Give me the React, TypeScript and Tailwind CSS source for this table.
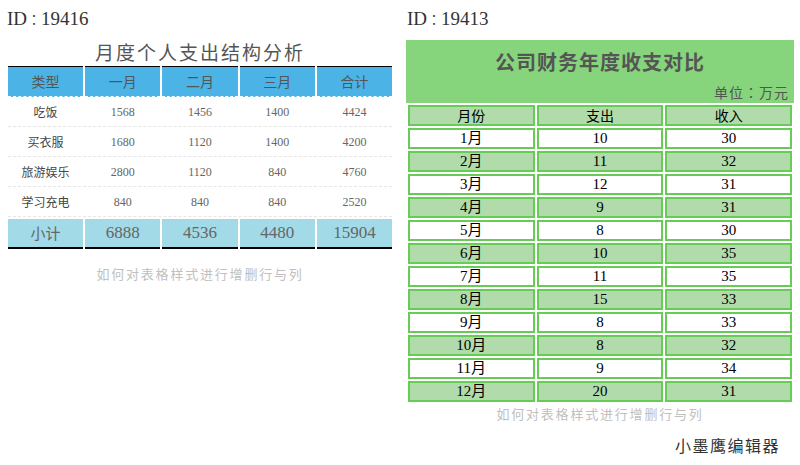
import React from 'react';

const SERIF = "font-['Liberation_Serif','Noto_Sans_CJK_SC',serif]";
const SANS = "font-['Noto_Sans_CJK_SC',sans-serif]";
const COLON = "font-['Noto_Sans_CJK_TC',sans-serif]";

const personal = [
  { type: '吃饭', vals: [1568, 1456, 1400, 4424] },
  { type: '买衣服', vals: [1680, 1120, 1400, 4200] },
  { type: '旅游娱乐', vals: [2800, 1120, 840, 4760] },
  { type: '学习充电', vals: [840, 840, 840, 2520] },
];

const company = [
  [10, 30], [11, 32], [12, 31], [9, 31], [8, 30], [10, 35],
  [11, 35], [15, 33], [8, 33], [8, 32], [9, 34], [20, 31],
];

const IdLabel = ({ id }: { id: string }) => (
  <div className={`${SERIF} flex items-center text-[19px] leading-none text-[#333] pl-[7px] pt-[9px]`}>
    ID
    <span className={`${COLON} inline-flex w-[14px] justify-center text-[15px] font-light`}>：</span>
    {id}
  </div>
);

// 왼쪽 표: 월별 개인 지출
const PersonalTable = () => (
  <div className="w-[400px] shrink-0">
    <div className="h-[38px]">
      <IdLabel id="19416" />
    </div>
    <div className={`${SANS} text-center text-[19px] leading-[28px] tracking-[2px] text-[#555]`}>
      月度个人支出结构分析
    </div>
    <div className="mx-[8px] w-[384px]">
      <div className="grid grid-cols-5 gap-x-[2px]">
        {['类型', '一月', '二月', '三月', '合计'].map((h) => (
          <div key={h} className="h-[31px] border-t border-black bg-[#4cb3e6]">
            <div
              className={`${SANS} h-[30px] border-b border-dashed border-white flex items-center justify-center text-[14px] text-[#555]`}
            >
              {h}
            </div>
          </div>
        ))}
      </div>
      {personal.map((r) => (
        <div key={r.type} className="grid grid-cols-5 gap-x-[2px] h-[30px] border-b border-dashed border-[#e6e6e6]">
          <div className={`${SANS} flex items-center justify-center text-[12px] text-[#444]`}>{r.type}</div>
          {r.vals.map((v, i) => (
            <div key={i} className={`${SERIF} flex items-center justify-center text-[12px] text-[#666]`}>
              {v}
            </div>
          ))}
        </div>
      ))}
      <div className="grid grid-cols-5 gap-x-[2px] mt-[2px]">
        {['小计', '6888', '4536', '4480', '15904'].map((v, i) => (
          <div
            key={v}
            className={`${i === 0 ? SANS + ' text-[15px]' : SERIF + ' text-[17px]'} h-[30px] bg-[#a2dae7] border-b-2 border-black flex items-center justify-center text-[#666]`}
          >
            {v}
          </div>
        ))}
      </div>
      <div className={`${SANS} text-center text-[13px] tracking-[1.8px] text-[#c0c0c0] mt-[15px]`}>
        如何对表格样式进行增删行与列
      </div>
    </div>
  </div>
);

// 오른쪽 표: 회사 연간 수지
const CompanyTable = () => (
  <div className="w-[400px] shrink-0">
    <div className="h-[40px]">
      <IdLabel id="19413" />
    </div>
    <div className="mx-[6px] w-[388px] h-[63px] bg-[#86d47c] flex flex-col">
      <div className={`${SANS} text-center font-bold text-[20px] tracking-[1px] text-[#555] pt-[7px] leading-[30px]`}>
        公司财务年度收支对比
      </div>
      <div className={`${SANS} text-right text-[14px] tracking-[1px] text-[#555] pr-[5px] leading-[20px] mt-[5px]`}>
        单位<span className={COLON}>：</span>万元
      </div>
    </div>
    <div className="mx-[8px] w-[384px] grid grid-cols-3 gap-[2px] mt-[2px]">
      {['月份', '支出', '收入'].map((h) => (
        <div
          key={h}
          className={`${SANS} h-[21px] border-2 border-[#66cc55] bg-[#b1dbab] flex items-center justify-center text-[14px] text-black`}
        >
          {h}
        </div>
      ))}
      {company.map((r, idx) => {
        const bg = idx % 2 === 0 ? 'bg-white' : 'bg-[#b1dbab]';
        return (
          <React.Fragment key={idx}>
            <div className={`${SERIF} h-[21px] border-2 border-[#66cc55] ${bg} flex items-center justify-center text-[15px] text-black`}>
              {idx + 1}月
            </div>
            <div className={`${SERIF} h-[21px] border-2 border-[#66cc55] ${bg} flex items-center justify-center text-[15px] text-black`}>
              {r[0]}
            </div>
            <div className={`${SERIF} h-[21px] border-2 border-[#66cc55] ${bg} flex items-center justify-center text-[15px] text-black`}>
              {r[1]}
            </div>
          </React.Fragment>
        );
      })}
    </div>
    <div className={`${SANS} text-center text-[13px] tracking-[1.8px] text-[#c0c0c0] mt-[2px] leading-[20px]`}>
      如何对表格样式进行增删行与列
    </div>
    <div className={`${SANS} text-right text-[16px] tracking-[1.5px] text-[#333] pr-[20px] mt-[10px] leading-[22px]`}>
      小墨鹰编辑器
    </div>
  </div>
);

export default function App() {
  return (
    <div className="w-[800px] h-[465px] bg-white flex overflow-hidden">
      <PersonalTable />
      <CompanyTable />
    </div>
  );
}
